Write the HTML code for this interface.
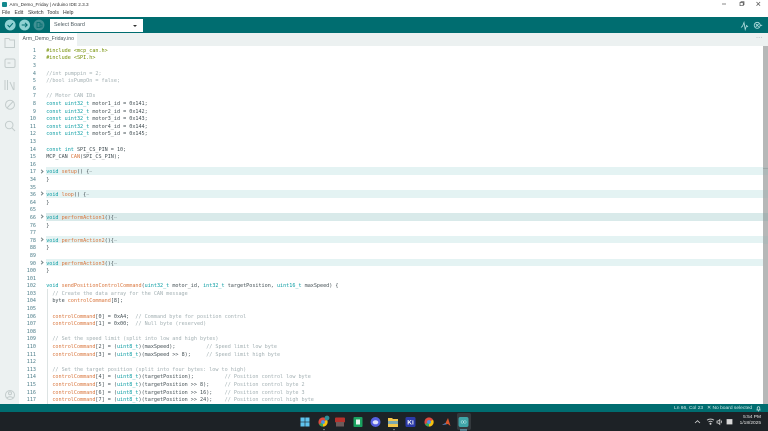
<!DOCTYPE html>
<html lang="en"><head><meta charset="utf-8"><title>Arm_Demo_Friday | Arduino IDE 2.3.3</title>
<style>
*{margin:0;padding:0;box-sizing:border-box}
html,body{width:768px;height:431px;overflow:hidden;background:#fff;font-family:"Liberation Sans",sans-serif}
.a{position:absolute}
#code{position:absolute;left:0;top:45.9px;width:763px;font-family:"DejaVu Sans Mono","Liberation Mono",monospace;font-size:5.12px;color:#434f54;filter:blur(.2px)}
#code div{position:relative;height:7.6px;line-height:10px;white-space:pre;padding-left:46.2px}
#code div.f{background:linear-gradient(to right,transparent 46px,#e4f3f3 46px)}
#code div.c{background:linear-gradient(to right,transparent 46px,#d9eaea 46px)}
#code i{position:absolute;left:18px;width:18px;text-align:right;font-style:normal;color:#4f7f8b}
#code b{position:absolute;left:39.6px;top:2.3px;width:3px;height:3px;border-top:.5px solid #7a878a;border-right:.5px solid #7a878a;transform:rotate(45deg)}
.k{color:#0a9da3}.o{color:#d9743a}.m{color:#a3b0b3}.p{color:#728e00}.e{color:#a3b0b3}
</style></head><body>
<!-- title bar -->
<div class="a" style="left:0;top:0;width:768px;height:17px;background:#fff"></div>
<div class="a" style="left:2px;top:2px;width:5px;height:5px;background:#14898e;border-radius:1px"></div>
<div class="a" style="left:9.5px;top:1px;font-size:4.65px;line-height:8px;color:#333;white-space:pre">Arm_Demo_Friday | Arduino IDE 2.3.3</div>
<div class="a" style="left:2px;top:10px;font-size:5.1px;line-height:7px;color:#333;white-space:pre">File</div>
<div class="a" style="left:14.5px;top:10px;font-size:5.1px;line-height:7px;color:#333">Edit</div>
<div class="a" style="left:28px;top:10px;font-size:5.1px;line-height:7px;color:#333">Sketch</div>
<div class="a" style="left:47px;top:10px;font-size:5.1px;line-height:7px;color:#333">Tools</div>
<div class="a" style="left:63px;top:10px;font-size:5.1px;line-height:7px;color:#333">Help</div>
<svg class="a" style="left:715px;top:0" width="53" height="9" viewBox="0 0 53 9" fill="none" stroke="#555" stroke-width=".7"><path d="M7 4h4"/><path d="M25 2.5h3.2v3.2H25zM26 2.5V1.7h3v3h-.8"/><path d="M41.5 2l3.6 3.8M45.1 2l-3.6 3.8"/></svg>
<!-- toolbar -->
<div class="a" style="left:0;top:17px;width:768px;height:16px;background:#006d70"></div>
<svg class="a" style="left:0;top:17px" width="50" height="16" viewBox="0 0 50 16">
<circle cx="10.2" cy="8" r="5.4" fill="#8fd1d3"/><path d="M7.6 8l1.9 2 3.4-3.8" fill="none" stroke="#006d70" stroke-width="1"/>
<circle cx="24.6" cy="8" r="5.4" fill="#8fd1d3"/><path d="M21.7 8h5.4M25 5.8L27.2 8 25 10.2" fill="none" stroke="#006d70" stroke-width="1"/>
<circle cx="39" cy="8" r="5.4" fill="#3f9093"/><path d="M37 5.5h3v5h-3zM40 7h2v3h-2" fill="none" stroke="#006d70" stroke-width=".8"/>
</svg>
<div class="a" style="left:50px;top:19px;width:92.5px;height:12.5px;background:#fff"></div>
<div class="a" style="left:54px;top:19px;font-size:5.4px;line-height:12.5px;color:#4e5b61">Select Board</div>
<div class="a" style="left:132.5px;top:24.7px;width:0;height:0;border-left:2px solid transparent;border-right:2px solid transparent;border-top:2px solid #333"></div>
<svg class="a" style="left:738px;top:19px" width="26" height="13" viewBox="0 0 26 13" fill="none" stroke="#b5e0e1" stroke-width=".8"><path d="M3 8.5l1.6-1.5L6 3.5l1.2 7L8.6 6.5 10 8"/><circle cx="19.2" cy="6.3" r="3"/><path d="M17.7 4.8l3 3M20.7 4.8l-3 3M22.2 6.3h2"/></svg>
<!-- sidebar + tab bar -->
<div class="a" style="left:0;top:33px;width:19px;height:371px;background:#ecf1f1"></div>
<div class="a" style="left:19px;top:33px;width:749px;height:13px;background:#ecf1f1"></div>
<div class="a" style="left:19px;top:33px;width:58px;height:13px;background:#fff"></div>
<div class="a" style="left:22.5px;top:33px;font-size:5.2px;line-height:12.5px;color:#4e5b61;white-space:pre">Arm_Demo_Friday.ino</div>
<div class="a" style="left:756px;top:33px;font-size:6px;line-height:11px;color:#7f8c8d;letter-spacing:.1px">···</div>
<svg class="a" style="left:0;top:33px" width="19" height="371" viewBox="0 0 19 371" fill="none" stroke="#c3cccc" stroke-width="1">
<path d="M5 5.5h4l1 1.5h4.5v7.5H5z"/>
<rect x="5" y="26" width="10" height="8.5" rx="1.5"/><path d="M7.5 30h3"/>
<path d="M5 47v10M7.5 47v10M10 49l3.5 8M14 49v8"/>
<circle cx="10" cy="71.7" r="4.5"/><path d="M7 75l6-6.5"/>
<circle cx="9.2" cy="92" r="3.8"/><path d="M12 95l3 3"/>
<circle cx="10" cy="362" r="4.5"/><circle cx="10" cy="360.3" r="1.5"/><path d="M7 365.2c1-2 5-2 6 0"/>
</svg>
<!-- code -->
<div class="a" style="left:46.5px;top:288.8px;width:.6px;height:115px;background:#dde3e3"></div>
<div id="code"><div><i>1</i><span class="p">#include</span> <span class="p">&lt;mcp_can.h&gt;</span></div>
<div><i>2</i><span class="p">#include</span> <span class="p">&lt;SPI.h&gt;</span></div>
<div><i>3</i></div>
<div><i>4</i><span class="m">//int pumppin = 2;</span></div>
<div><i>5</i><span class="m">//bool isPumpOn = false;</span></div>
<div><i>6</i></div>
<div><i>7</i><span class="m">// Motor CAN IDs</span></div>
<div><i>8</i><span class="k">const</span> <span class="k">uint32_t</span> motor1_id = 0x141;</div>
<div><i>9</i><span class="k">const</span> <span class="k">uint32_t</span> motor2_id = 0x142;</div>
<div><i>10</i><span class="k">const</span> <span class="k">uint32_t</span> motor3_id = 0x143;</div>
<div><i>11</i><span class="k">const</span> <span class="k">uint32_t</span> motor4_id = 0x144;</div>
<div><i>12</i><span class="k">const</span> <span class="k">uint32_t</span> motor5_id = 0x145;</div>
<div><i>13</i></div>
<div><i>14</i><span class="k">const</span> <span class="k">int</span> SPI_CS_PIN = 10;</div>
<div><i>15</i>MCP_CAN <span class="o">CAN</span>(SPI_CS_PIN);</div>
<div><i>16</i></div>
<div class="f"><i>17</i><b></b><span class="k">void</span> <span class="o">setup</span>() {<span class="e">⋯</span></div>
<div><i>34</i>}</div>
<div><i>35</i></div>
<div class="f"><i>36</i><b></b><span class="k">void</span> <span class="o">loop</span>() {<span class="e">⋯</span></div>
<div><i>64</i>}</div>
<div><i>65</i></div>
<div class="c"><i>66</i><b></b><span class="k">void</span> <span class="o">performAction1</span>(){<span class="e">⋯</span></div>
<div><i>76</i>}</div>
<div><i>77</i></div>
<div class="f"><i>78</i><b></b><span class="k">void</span> <span class="o">performAction2</span>(){<span class="e">⋯</span></div>
<div><i>88</i>}</div>
<div><i>89</i></div>
<div class="f"><i>90</i><b></b><span class="k">void</span> <span class="o">performAction3</span>(){<span class="e">⋯</span></div>
<div><i>100</i>}</div>
<div><i>101</i></div>
<div><i>102</i><span class="k">void</span> <span class="o">sendPositionControlCommand</span>(<span class="k">uint32_t</span> motor_id, <span class="k">int32_t</span> targetPosition, <span class="k">uint16_t</span> maxSpeed) {</div>
<div><i>103</i>  <span class="m">// Create the data array for the CAN message</span></div>
<div><i>104</i>  byte <span class="o">controlCommand</span>[8];</div>
<div><i>105</i></div>
<div><i>106</i>  <span class="o">controlCommand</span>[0] = 0xA4;  <span class="m">// Command byte for position control</span></div>
<div><i>107</i>  <span class="o">controlCommand</span>[1] = 0x00;  <span class="m">// Null byte (reserved)</span></div>
<div><i>108</i></div>
<div><i>109</i>  <span class="m">// Set the speed limit (split into low and high bytes)</span></div>
<div><i>110</i>  <span class="o">controlCommand</span>[2] = (<span class="k">uint8_t</span>)(maxSpeed);          <span class="m">// Speed limit low byte</span></div>
<div><i>111</i>  <span class="o">controlCommand</span>[3] = (<span class="k">uint8_t</span>)(maxSpeed &gt;&gt; 8);     <span class="m">// Speed limit high byte</span></div>
<div><i>112</i></div>
<div><i>113</i>  <span class="m">// Set the target position (split into four bytes: low to high)</span></div>
<div><i>114</i>  <span class="o">controlCommand</span>[4] = (<span class="k">uint8_t</span>)(targetPosition);          <span class="m">// Position control low byte</span></div>
<div><i>115</i>  <span class="o">controlCommand</span>[5] = (<span class="k">uint8_t</span>)(targetPosition &gt;&gt; 8);     <span class="m">// Position control byte 2</span></div>
<div><i>116</i>  <span class="o">controlCommand</span>[6] = (<span class="k">uint8_t</span>)(targetPosition &gt;&gt; 16);    <span class="m">// Position control byte 3</span></div>
<div><i>117</i>  <span class="o">controlCommand</span>[7] = (<span class="k">uint8_t</span>)(targetPosition &gt;&gt; 24);    <span class="m">// Position control high byte</span></div></div>
<!-- scrollbar -->
<div class="a" style="left:763px;top:46px;width:5px;height:358px;background:#b6b8b8"></div>
<div class="a" style="left:763px;top:168px;width:5px;height:.8px;background:#8a8d8d"></div>
<div class="a" style="left:763px;top:167px;width:5px;height:8px;background:#a9b7b7;opacity:.6"></div>
<div class="a" style="left:763px;top:190px;width:5px;height:8px;background:#a9b7b7;opacity:.6"></div>
<div class="a" style="left:763px;top:213px;width:5px;height:8px;background:#a0b0b0;opacity:.7"></div>
<div class="a" style="left:763px;top:236px;width:5px;height:8px;background:#a9b7b7;opacity:.6"></div>
<!-- status bar -->
<div class="a" style="left:0;top:404px;width:768px;height:8px;background:#006d70"></div>
<div class="a" style="left:674px;top:404px;font-size:4.9px;line-height:9px;color:#cfe9e9;white-space:pre">Ln 66, Col 23</div>
<div class="a" style="left:707px;top:404px;font-size:4.9px;line-height:9px;color:#cfe9e9;white-space:pre">✕ No board selected</div>
<svg class="a" style="left:755px;top:405px" width="7" height="7" viewBox="0 0 7 7" fill="none" stroke="#cfe9e9" stroke-width=".7"><path d="M1.5 5h4M2.2 5V3a1.3 1.3 0 012.6 0v2M3 6h1"/></svg>
<!-- taskbar -->
<div class="a" style="left:0;top:412px;width:768px;height:19px;background:#1d2226"></div>
<div class="a" style="left:457px;top:413px;width:14px;height:17px;background:#33393d;border-radius:2px"></div>
<svg class="a" style="left:295px;top:412px" width="180" height="19" viewBox="0 0 180 19">
<g fill="#5fc3ee"><rect x="5.5" y="5.5" width="4.2" height="4.2"/><rect x="10.3" y="5.5" width="4.2" height="4.2"/><rect x="5.5" y="10.3" width="4.2" height="4.2"/><rect x="10.3" y="10.3" width="4.2" height="4.2"/></g>
<circle cx="28" cy="10" r="4.6" fill="#dd4b3e"/><path d="M28 10v4.6a4.6 4.6 0 004-6.9z" fill="#f4c20d"/><path d="M28 10l-4 2.3a4.6 4.6 0 004 2.3z" fill="#3aa757"/><circle cx="28" cy="10" r="1.9" fill="#4a8fe7"/><circle cx="32" cy="6" r="2.4" fill="#2c8c96"/>
<rect x="40" y="5.5" width="10" height="5" rx="1" fill="#b5312c"/><rect x="41" y="10" width="8" height="4.5" fill="#6d5a5a"/>
<rect x="58.5" y="5" width="9" height="10" rx="1" fill="#1aa260"/><rect x="61" y="7.5" width="4" height="5" fill="#e8f5ee"/>
<circle cx="80.5" cy="10" r="5" fill="#5560e0"/><ellipse cx="80.5" cy="10.3" rx="2.8" ry="2" fill="#dfe2fb"/>
<path d="M93 6h4l1 1h5v8h-10z" fill="#f4c64a"/><rect x="93" y="9" width="10" height="3" fill="#4a9bd8" opacity=".7"/>
<rect x="110.5" y="5" width="10" height="10" rx="1.5" fill="#2b3aa8"/>
<text x="115.5" y="12.5" font-family="Liberation Sans" font-size="6.5" font-weight="bold" fill="#fff" text-anchor="middle">Ki</text>
<circle cx="134" cy="10" r="4.6" fill="#dd4b3e"/><path d="M134 10v4.6a4.6 4.6 0 004-6.9z" fill="#f4c20d"/><path d="M134 10l-4 2.3a4.6 4.6 0 004 2.3z" fill="#3aa757"/><circle cx="134" cy="10" r="1.9" fill="#4a8fe7"/>
<path d="M147 13l3.5-2 2.5-5 2.5 8-2.5-2z" fill="#d9562b"/><path d="M147 13l3.5-2 1 1.5z" fill="#3f7fc4"/>
<rect x="163.5" y="5" width="10" height="10" rx="2" fill="#3fa5a8"/><path d="M166 10a1.3 1.3 0 012.6 0 1.3 1.3 0 002.6 0 1.3 1.3 0 00-2.6 0 1.3 1.3 0 01-2.6 0" fill="none" stroke="#c8ecec" stroke-width=".5"/>
<rect x="28" y="17.3" width="2" height=".8" fill="#999"/><rect x="98" y="17.3" width="2" height=".8" fill="#999"/><rect x="165" y="17.5" width="7" height="1" fill="#7ccbe8"/>
</svg>
<svg class="a" style="left:690px;top:414px" width="48" height="15" viewBox="0 0 48 15" fill="none" stroke="#d8d8d8" stroke-width=".8"><path d="M5 9l2.5-2.3L10 9"/><path d="M17 6.2c2-1.5 5-1.5 7 0M18.5 8c1.2-1 2.8-1 4 0" /><circle cx="20.5" cy="9.7" r=".6" fill="#d8d8d8"/><path d="M27 7v2h1.2l1.6 1.4V5.6L28.2 7zM31 6.5c.6.8.6 1.8 0 2.6"/><rect x="37" y="5.5" width="5" height="4.5" fill="#d8d8d8"/></svg>
<div class="a" style="left:731px;top:415px;width:30px;text-align:right;font-size:4.8px;line-height:6px;color:#e5e5e5;white-space:nowrap">5:54 PM<br>1/18/2025</div>
</body></html>
